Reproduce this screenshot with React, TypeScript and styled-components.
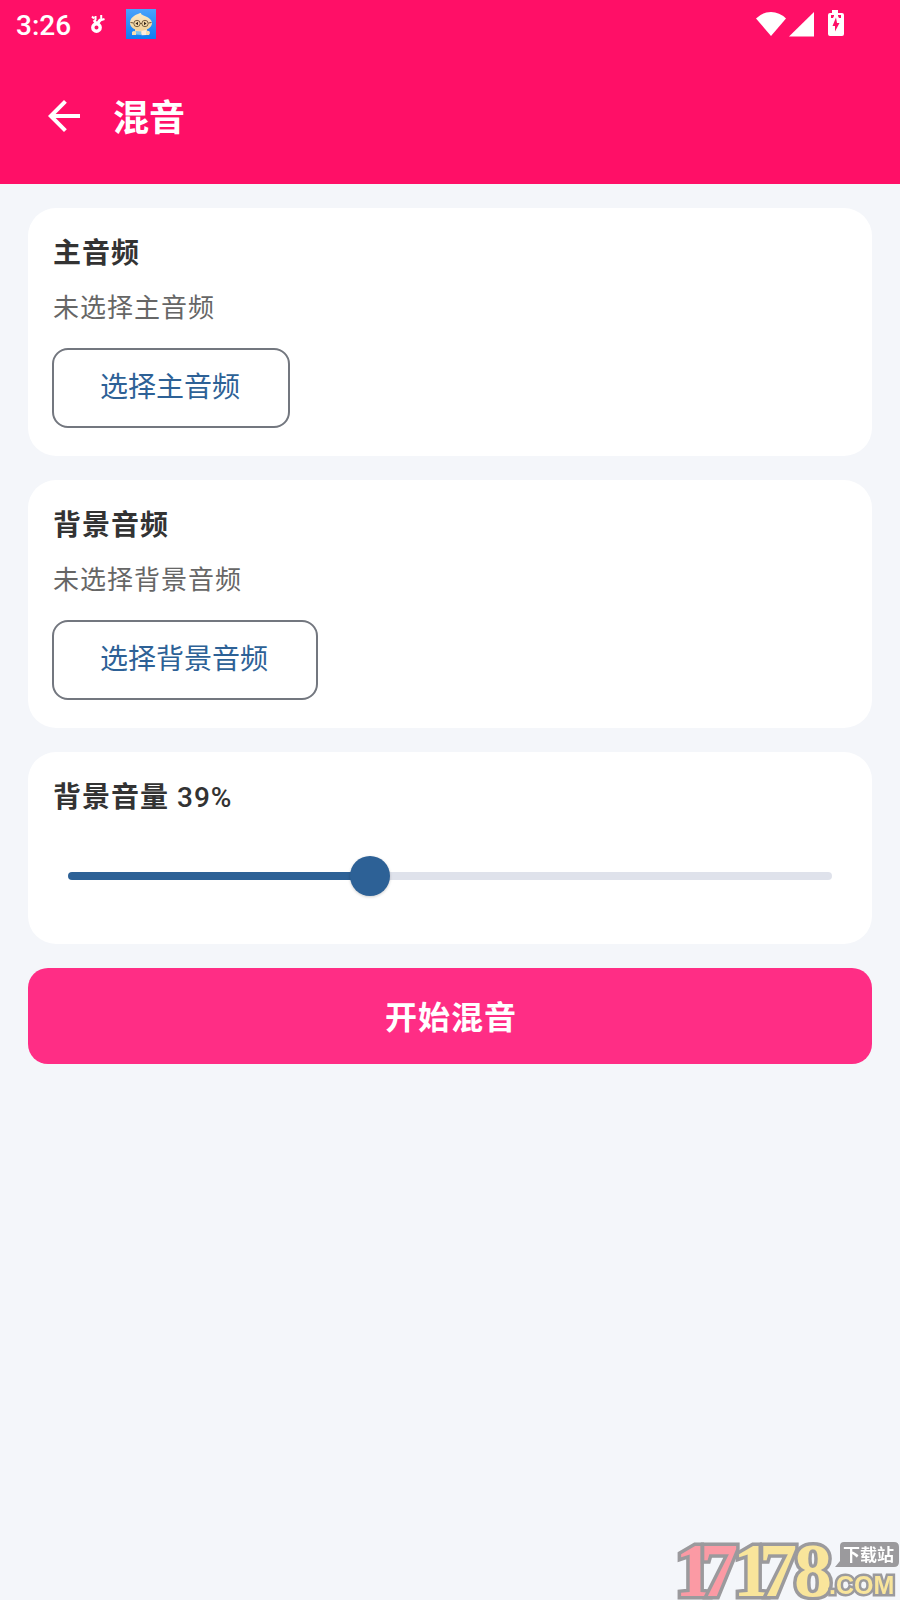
import { useState } from 'react';
import type { CSSProperties } from 'react';
import styled, { createGlobalStyle } from 'styled-components';

const GlobalStyle = createGlobalStyle`
  * { box-sizing: border-box; }
  body {
    margin: 0;
    background: #f4f6fa;
    color: #333;
    font-family: Roboto, 'Noto Sans CJK SC', sans-serif;
  }
  button, input { font: inherit; }
`;

const Screen = styled.div`
  display: flex;
  flex-direction: column;
  min-height: 100vh;
`;

const Header = styled.header`
  background: #ff0f67;
  color: #fff;
`;

const StatusBar = styled.div`
  display: flex;
  align-items: center;
  height: 48px;
  padding: 0 56px 0 16px;
`;

const Clock = styled.time`
  padding-top: 4px;
  font-size: 28px;
  font-weight: 500;
  line-height: 32px;
`;

const Notifications = styled.div`
  display: flex;
  align-items: center;
  gap: 21px;
  margin-left: 20px;
`;

const Indicators = styled.div`
  display: flex;
  align-items: center;
  margin-left: auto;
`;

const Toolbar = styled.div`
  display: flex;
  align-items: center;
  gap: 25px;
  height: 136px;
  padding: 0 40px;
`;

const BackButton = styled.button`
  display: flex;
  padding: 0;
  border: 0;
  background: none;
  color: inherit;
  cursor: pointer;
`;

const PageTitle = styled.h1`
  margin: 0;
  padding-top: 6px;
  font-size: 36px;
  font-weight: 700;
  line-height: 48px;
`;

const Content = styled.main`
  display: flex;
  flex-direction: column;
  gap: 24px;
  padding: 24px 28px;
`;

const Card = styled.section<{ $bottom?: number }>`
  padding: 26px 24px ${(p) => p.$bottom ?? 28}px;
  border-radius: 28px;
  background: #fff;
`;

const CardTitle = styled.h2`
  margin: 0;
  padding-left: 1px;
  font-size: 28px;
  font-weight: 700;
  line-height: 40px;
  letter-spacing: 1px;
`;

const Percent = styled.output`
  font-weight: 500;
`;

const FileStatus = styled.p`
  margin: 16px 0 22px;
  padding-left: 1px;
  color: #666;
  font-size: 26px;
  line-height: 36px;
  letter-spacing: 1px;
`;

const OutlinedButton = styled.button`
  display: block;
  height: 80px;
  padding: 0 48px 0 46px;
  border: 2px solid #73777f;
  border-radius: 16px;
  background: none;
  color: #2d6196;
  font-size: 28px;
  line-height: 40px;
  cursor: pointer;
`;

const StartButton = styled.button`
  height: 96px;
  padding: 4px 24px 0 26px;
  border: 0;
  border-radius: 20px;
  background: #ff2d85;
  color: #fff;
  font-size: 32px;
  font-weight: 700;
  line-height: 48px;
  letter-spacing: 1px;
  cursor: pointer;
`;

const SliderRow = styled.div`
  display: flex;
  margin-top: 38px;
  padding: 0 16px;
`;

const Slider = styled.input`
  appearance: none;
  width: 100%;
  height: 40px;
  margin: 0;
  background: none;
  cursor: pointer;

  &::-webkit-slider-runnable-track {
    height: 8px;
    border-radius: 4px;
    background: linear-gradient(to right, #2d6196 var(--filled), #dfe2eb var(--filled));
  }

  &::-webkit-slider-thumb {
    appearance: none;
    width: 40px;
    height: 40px;
    margin-top: -16px;
    border-radius: 50%;
    background: #2d6196;
    box-shadow: 0 1px 3px rgba(0, 0, 0, 0.2);
  }
`;

const Watermark = styled.svg`
  position: fixed;
  right: 0;
  bottom: 0;
`;

function AlertIcon() {
  return (
    <svg width="14" height="20" viewBox="0 0 14 20" fill="none" stroke="#fff" aria-hidden="true">
      <circle cx="5.500" cy="13.500" r="3.700" strokeWidth="3.400" />
      <path d="M6.500 9.500 9.500 5.500M5 9 3 6" strokeWidth="3" />
      <path d="M10.200 1v6M9 6.500 13.500 5M1 2.500l2 2M4.500 2v4" strokeWidth="2" />
    </svg>
  );
}

function AppIcon() {
  return (
    <svg width="30" height="30" viewBox="0 0 30 30" aria-hidden="true">
      <defs>
        <linearGradient id="sky" x1="0" y1="0" x2="0" y2="1">
          <stop offset="0" stopColor="#4aa3fb" />
          <stop offset="1" stopColor="#107df0" />
        </linearGradient>
        <linearGradient id="skin" x1="0" y1="0" x2="0" y2="1">
          <stop offset="0" stopColor="#fbe9c6" />
          <stop offset="1" stopColor="#f3d49b" />
        </linearGradient>
      </defs>
      <path fill="url(#sky)" d="M0 0h30v30H0z" />
      <path fill="#f7dcab" d="M9 19h12v6H9z" />
      <path
        fill="url(#skin)"
        d="M4 14c0-5 4-7.500 8-9 1-.4 2-1 3-1 0 1.500 1 1.700 2 2.200 5 1.600 9 4.500 9 7.800 0 4.500-5 7.500-11 7.500S4 18.500 4 14z"
      />
      <g fill="#f3d7a5" stroke="#6b5338" strokeWidth="0.900">
        <circle cx="11" cy="14.500" r="3.200" />
        <circle cx="19" cy="14.500" r="3.200" />
      </g>
      <path d="M14 14.500h2M4.500 13.500l3 .5M25.500 13.500l-3 .5" stroke="#6b5338" />
      <path fill="#33251a" d="M12 12.700v3.600L9.500 14.500zM18 12.700v3.600l2.500-1.800z" />
      <path fill="#7cc6f0" d="m9.500 22 6 .5V26l-6-.5z" />
      <path fill="#fdeee0" d="m15.500 22 5-1v5l-5 .3z" />
      <path fill="#f9dfb0" d="M6 23q2-2 4 0v3H6zM20 22q4-1 4 2l-1 2h-3z" />
    </svg>
  );
}

function StatusIcons() {
  return (
    <svg width="88" height="28" viewBox="0 0 88 28" fill="#fff" aria-hidden="true">
      <path d="M15 26 0 8.500q6.500-6.500 15-6.500t15 6.500z" />
      <path d="M58 2v24.500H33z" />
      <path
        fillRule="evenodd"
        d="M76 0h6v3h4q2 0 2 2v19q0 2-2 2H74q-2 0-2-2V5q0-2 2-2h2zM75 5v3h2l1-2V5zM82 5v1l1 2h2V5zM80 7.500 76.500 16H79v5.500l4.500-8.500H81z"
      />
    </svg>
  );
}

function BackIcon() {
  return (
    <svg width="48" height="48" viewBox="0 0 24 24" fill="currentColor" aria-hidden="true">
      <path d="M20 11H7.830l5.590-5.590L12 4l-8 8 8 8 1.410-1.410L7.830 13H20z" />
    </svg>
  );
}

function SiteMark() {
  return (
    <Watermark width="240" height="90" viewBox="0 0 240 90">
      <text
        x="15 40 73 99 134"
        y="86"
        fill="#f9e59b"
        stroke="#9b9a9d"
        strokeWidth="7"
        paintOrder="stroke"
        fontFamily="Liberation Serif, serif"
        fontSize="76"
        fontWeight="700"
      >
        <tspan fill="#fb9aa4">17</tspan>178
      </text>
      <path fill="#9b9a9d" d="M184 32h50q5 0 5 5v15q0 5-5 5h-59l5-6V36q0-4 4-4z" />
      <text
        x="183"
        y="51"
        fill="#fff"
        fontFamily="Noto Sans CJK SC, sans-serif"
        fontSize="17"
        fontWeight="700"
      >
        下载站
      </text>
      <text
        x="169"
        y="84"
        fill="#f9e59b"
        stroke="#9b9a9d"
        strokeWidth="5"
        paintOrder="stroke"
        fontFamily="Liberation Sans, sans-serif"
        fontSize="25"
        fontWeight="700"
      >
        .COM
      </text>
    </Watermark>
  );
}

export default function App() {
  const [volume, setVolume] = useState(39);

  return (
    <Screen>
      <GlobalStyle />
      <Header>
        <StatusBar>
          <Clock>3:26</Clock>
          <Notifications>
            <AlertIcon />
            <AppIcon />
          </Notifications>
          <Indicators>
            <StatusIcons />
          </Indicators>
        </StatusBar>
        <Toolbar>
          <BackButton type="button" aria-label="返回">
            <BackIcon />
          </BackButton>
          <PageTitle>混音</PageTitle>
        </Toolbar>
      </Header>
      <Content>
        <Card>
          <CardTitle>主音频</CardTitle>
          <FileStatus>未选择主音频</FileStatus>
          <OutlinedButton type="button">选择主音频</OutlinedButton>
        </Card>
        <Card>
          <CardTitle>背景音频</CardTitle>
          <FileStatus>未选择背景音频</FileStatus>
          <OutlinedButton type="button">选择背景音频</OutlinedButton>
        </Card>
        <Card $bottom={48}>
          <CardTitle>
            <label htmlFor="volume">背景音量</label> <Percent htmlFor="volume">{volume}%</Percent>
          </CardTitle>
          <SliderRow>
            <Slider
              id="volume"
              type="range"
              min={0}
              max={100}
              value={volume}
              onChange={(e) => setVolume(Number(e.target.value))}
              style={{ '--filled': `${volume}%` } as CSSProperties}
            />
          </SliderRow>
        </Card>
        <StartButton type="button">开始混音</StartButton>
      </Content>
      <SiteMark />
    </Screen>
  );
}
